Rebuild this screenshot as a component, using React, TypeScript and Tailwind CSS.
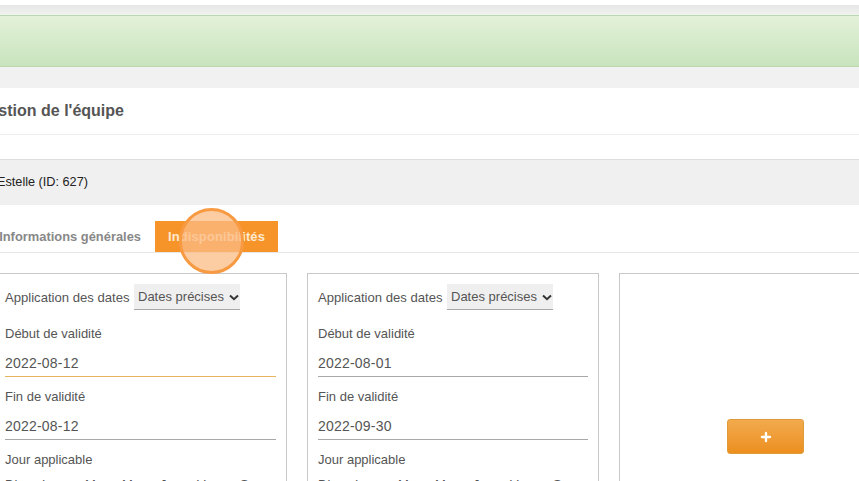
import { Plus } from "lucide-react";

const days = [
  { label: "Dim", width: "w-[37px]" },
  { label: "Lun", width: "w-[43px]" },
  { label: "Mar", width: "w-[37px]" },
  { label: "Mer", width: "w-[38px]" },
  { label: "Jeu", width: "w-[37px]" },
  { label: "Ven", width: "w-[43px]" },
  { label: "Sam", width: "w-[30px]" },
];

function Field({ label, value, focused }: { label: string; value: string; focused?: boolean }) {
  return (
    <div>
      <div className="h-[21px] text-[13px] leading-[21px]">{label}</div>
      <div
        className={`mt-[9px] h-[24px] border-b text-[14px] leading-[20px] tracking-[0.2px] ${
          focused ? "border-[#e8b45f]" : "border-[#a8a8a8]"
        }`}
      >
        {value}
      </div>
    </div>
  );
}

function DateCard({ from, to, focused, className }: { from: string; to: string; focused?: boolean; className: string }) {
  return (
    <div className={`h-[240px] shrink-0 overflow-hidden border border-[#c9c9c9] bg-white px-[10px] ${className}`}>
      <div className="mt-[10px] flex h-[26px] items-center gap-[4px] text-[13.1px]">
        <span className="w-[125px] whitespace-nowrap pt-[1px]">Application des dates</span>
        <div className="flex h-[26px] items-center gap-[5px] border-b border-[#a8a8a8] bg-[#efefef] pl-[4px] pr-[1px] pt-[1px] text-[13px]">
          Dates précises
          <svg width="10" height="7" viewBox="0 0 10 7">
            <path d="M1 1.5 L5 5.2 L9 1.5" fill="none" stroke="#333" strokeWidth="2" />
          </svg>
        </div>
      </div>
      <div className="mt-[13px] flex flex-col gap-[9px]">
        <Field label="Début de validité" value={from} focused={focused} />
        <Field label="Fin de validité" value={to} />
      </div>
      <div className="mt-[9px] h-[21px] text-[13px] leading-[21px]">Jour applicable</div>
      <div className="mt-[7px] flex text-[13px] leading-[15px]">
        {days.map((day) => (
          <span key={day.label} className={day.width}>
            {day.label}
          </span>
        ))}
      </div>
    </div>
  );
}

export default function App() {
  return (
    <div className="h-[481px] w-[859px] overflow-hidden bg-white font-['Liberation_Sans',Arial,sans-serif] text-[#555]">
      <div className="h-[5px] bg-white" />
      <div className="h-[10px] bg-gradient-to-b from-[#e6e6e6] to-[#f0f3f0]" />
      <div className="h-[52px] border-y border-[#bcd8b0] bg-gradient-to-b from-[#e3f1d9] to-[#c8e4bd]" />
      <div className="h-[21px] bg-[#f1f1f1]" />

      <div className="flex h-[47px] items-center border-b border-[#eee]">
        <h1 className="ml-[-23px] whitespace-nowrap text-[16px] font-bold text-[#555]">Gestion de l'équipe</h1>
      </div>

      <div className="mt-[24px] flex h-[46px] items-center border-t border-[#ddd] bg-[#f0f0f0] pt-[1px] text-[12.7px] text-[#222]">
        <span className="ml-[-3px]">Estelle (ID: 627)</span>
      </div>

      <div className="flex h-[48px] items-end border-b border-[#e8e8e8]">
        <div className="flex h-[31px] w-[155px] items-center justify-end whitespace-nowrap pr-[14px] text-[12.9px] font-bold text-[#888]">
          Informations générales
        </div>
        <div className="relative flex h-[31px] w-[123px] items-center justify-center whitespace-nowrap bg-[#f6942a] text-[13px] font-bold tracking-[0.1px] text-[#ffe9cf]">
          Indisponibilités
          <div className="absolute left-[24px] top-[-13px] h-[66px] w-[65px] rounded-full border-[3px] border-[#f79a42] bg-[#fbbb84]/75" />
        </div>
      </div>

      <div className="mt-[20px] flex gap-[20px]">
        <DateCard from="2022-08-12" to="2022-08-12" focused className="ml-[-6px] w-[293px]" />
        <DateCard from="2022-08-01" to="2022-09-30" className="w-[292px]" />
        <div className="flex h-[240px] w-[300px] shrink-0 border border-[#c9c9c9] pl-[107px] pt-[145px]">
          <button className="flex h-[35px] w-[77px] items-center justify-center rounded-[3px] border border-[#e09a3a] bg-gradient-to-b from-[#f2aa4c] to-[#ec8f1c] text-white">
            <Plus size={14} strokeWidth={4} />
          </button>
        </div>
      </div>
    </div>
  );
}
